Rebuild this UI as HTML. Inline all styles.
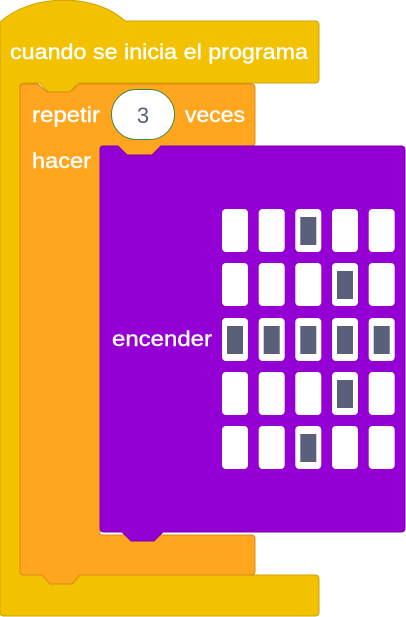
<!DOCTYPE html>
<html><head><style>
body{margin:0;width:406px;height:617px;background:#fff;overflow:hidden}
svg{display:block}
text{font-family:"Liberation Sans",sans-serif;fill:#fff;font-size:21px;stroke:#fff;stroke-width:0.4}
</style></head><body>
<svg width="406" height="617" viewBox="0 0 406 617">
<path d="M0,22 C32,-7 95,-7 125,21 L315,21 Q319,21 319,25 L319,79 Q319,83 315,83 L78,83 L70,92 L48,92 L40,83 L24,83 Q20,83 20,87 L20,571 Q20,575 24,575 L315,575 Q319,575 319,579 L319,612 Q319,616 315,616 L4,616 Q0,616 0,612 Z" fill="#f2c200" stroke="#d2a300" stroke-width="1"/>
<path d="M20,88 Q20,84 24,84 L38,84 L47,92 L70,92 L79,84 L251,84 Q255,84 255,88 L255,142 Q255,146 251,146 L161,146 L152,155 L127,155 L118,146 L100,146 L100,535 L251,535 Q255,535 255,539 L255,571 Q255,575 251,575 L80,575 L72,584 L50,584 L42,575 L24,575 Q20,575 20,571 Z" fill="#ffa61e" stroke="#d9891a" stroke-width="1"/>
<path d="M100,150 Q100,146 104,146 L118,146 L127,155 L152,155 L161,146 L401,146 Q405,146 405,150 L405,528 Q405,532 401,532 L163,532 L154,541 L131,541 L122,532 L104,532 Q100,532 100,528 Z" fill="#9400d3" stroke="#7a00b0" stroke-width="1"/>
<text x="10" y="59" textLength="298" lengthAdjust="spacingAndGlyphs">cuando se inicia el programa</text>
<text x="32" y="122" textLength="68" lengthAdjust="spacingAndGlyphs">repetir</text>
<rect x="111.5" y="89.5" width="63" height="50" rx="25" fill="#fff" stroke="#3d8a4a" stroke-width="1"/>
<text x="143" y="123" text-anchor="middle" style="fill:#575e75;stroke:none;font-size:22px">3</text>
<text x="185" y="122" textLength="60" lengthAdjust="spacingAndGlyphs">veces</text>
<text x="32" y="168" textLength="59" lengthAdjust="spacingAndGlyphs">hacer</text>
<text x="112" y="346" textLength="100" lengthAdjust="spacingAndGlyphs">encender</text>
<g id="g"></g>
</svg>
<script>
var g=document.getElementById('g'),cx=[222,258.7,295.3,332,368.7],ry=[209,263,318,372,426];
var lit={'0,2':1,'1,3':1,'2,0':1,'2,1':1,'2,2':1,'2,3':1,'2,4':1,'3,3':1,'4,2':1};
var s='';
for(var r=0;r<5;r++)for(var c=0;c<5;c++){
s+='<rect x="'+cx[c]+'" y="'+ry[r]+'" width="26" height="43" rx="4" fill="#fff"/>';
if(lit[r+','+c])s+='<rect x="'+(cx[c]+5)+'" y="'+(ry[r]+8)+'" width="16" height="28" fill="#5b607a"/>';
}
g.innerHTML=s;
</script>
</body></html>
